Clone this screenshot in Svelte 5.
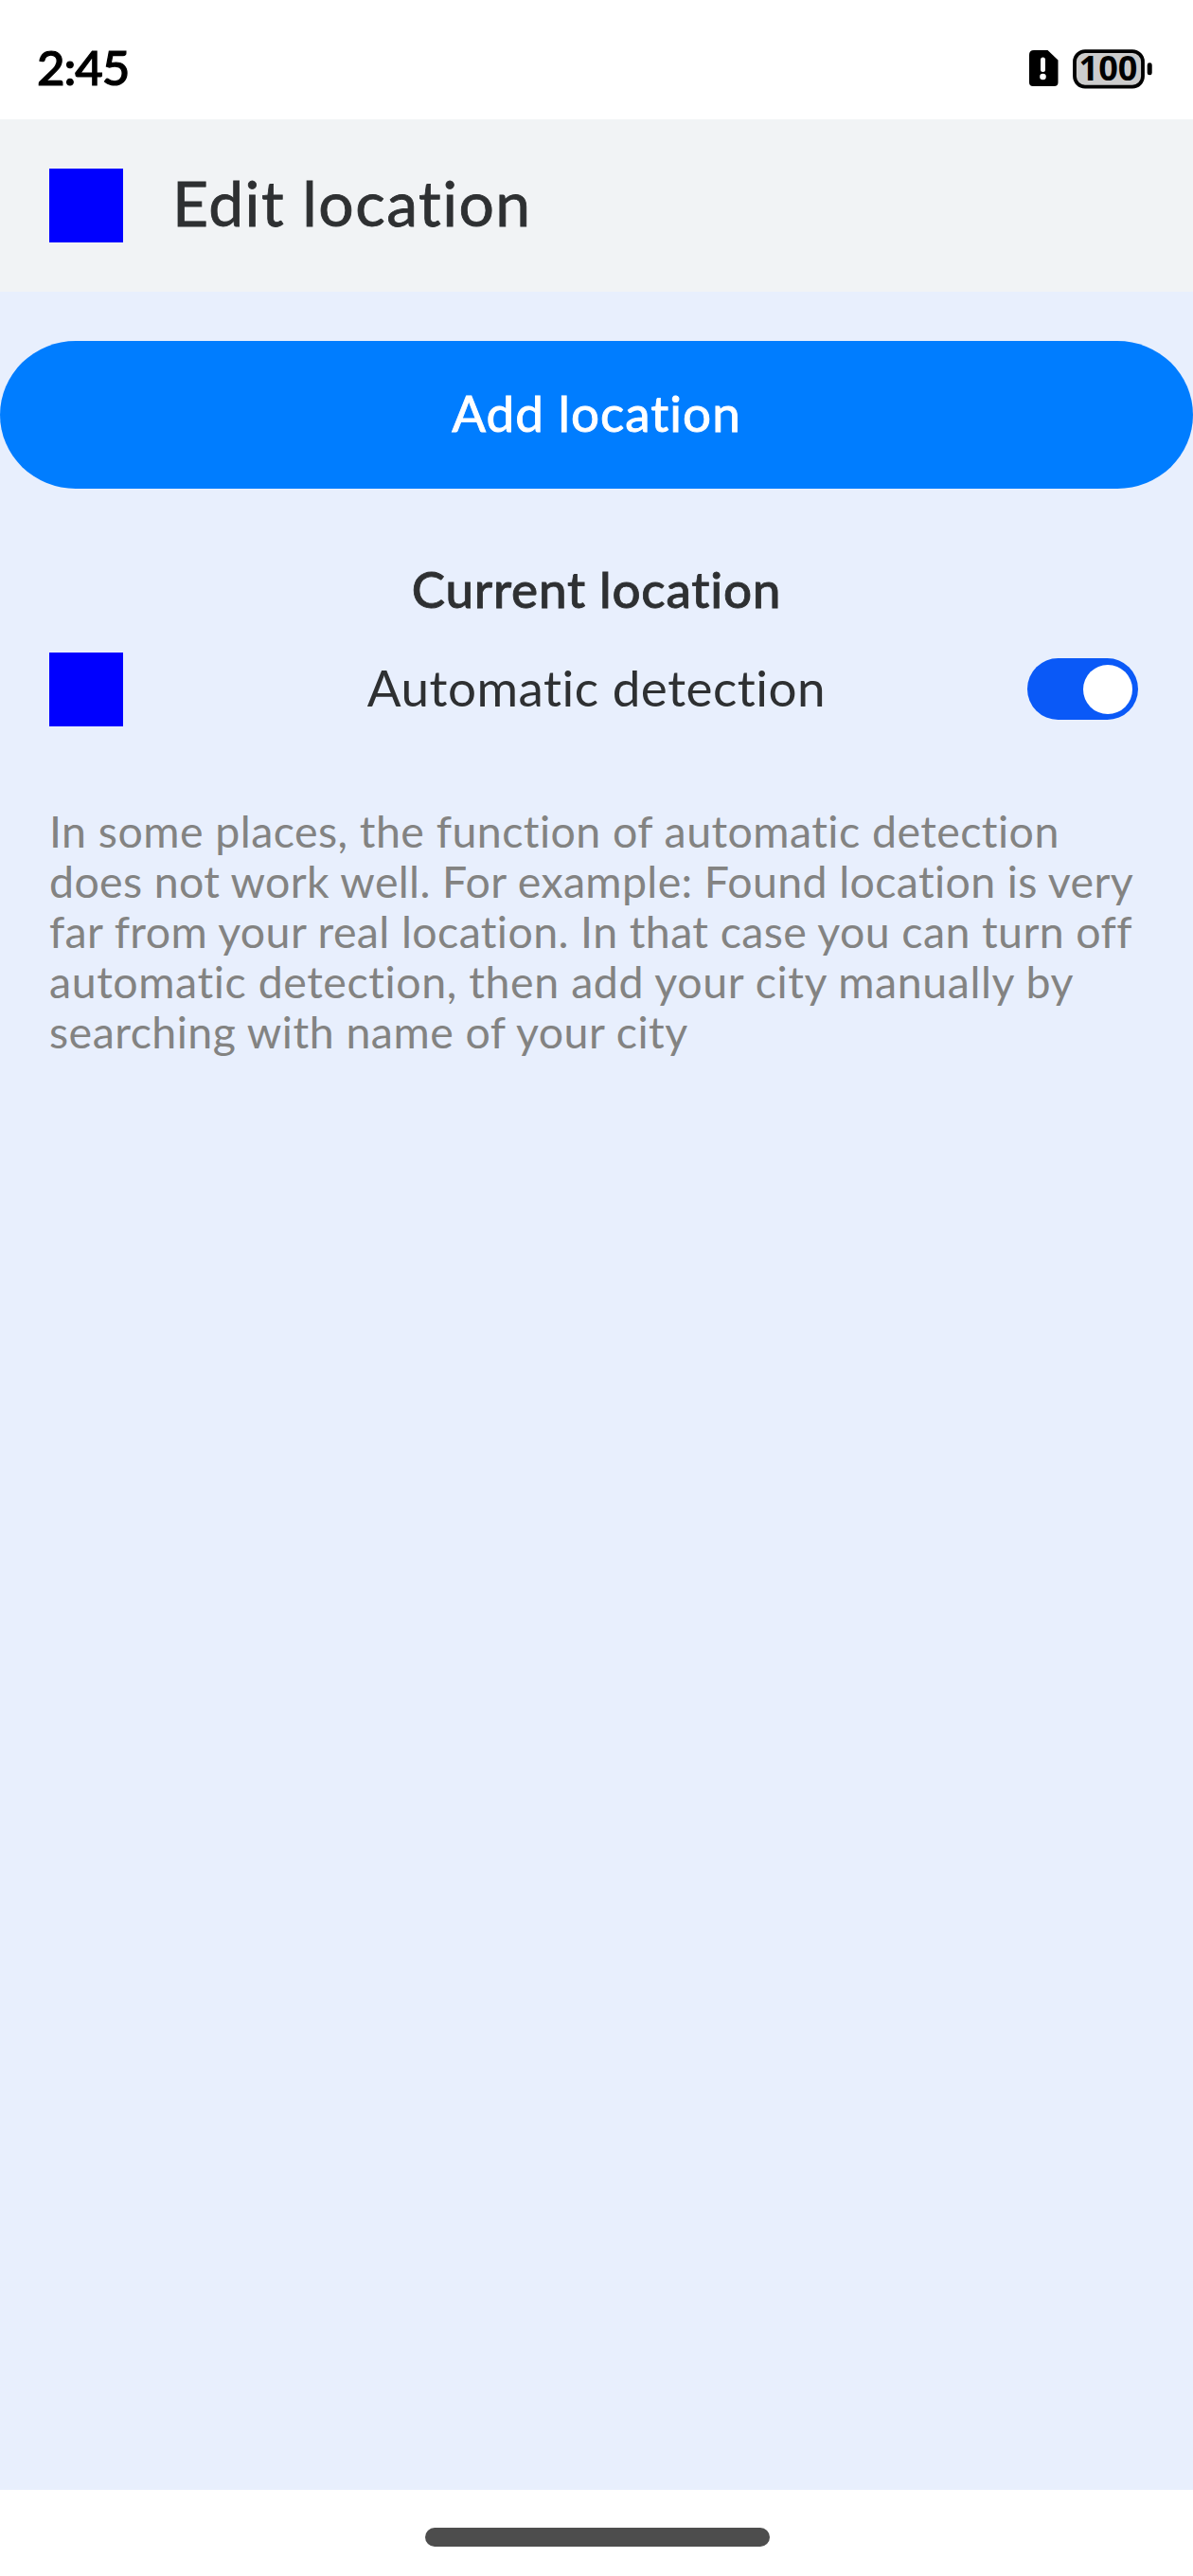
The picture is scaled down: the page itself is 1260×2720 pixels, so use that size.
<script>
  const note = [
    { text: 'In some places, the function of automatic detection', tracking: 0.44 },
    { text: 'does not work well. For example: Found location is very', tracking: 0.34 },
    { text: 'far from your real location. In that case you can turn off', tracking: 0.38 },
    { text: 'automatic detection, then add your city manually by', tracking: 0.57 },
    { text: 'searching with name of your city', tracking: 0.47 }
  ];
  let automatic = $state(true);
</script>

<div class="screen">
  <div class="status">
    <span class="time">2:45</span>
    <svg class="indicators" width="134" height="62" viewBox="0 -8 134 62">
      <path d="M8 3H22.5L33.5 13.5V37Q33.5 41 29.5 41H7Q3 41 3 37V8Q3 3 8 3Z" />
      <path d="M17.5 13V23.5" stroke="#fff" stroke-width="5" stroke-linecap="round" />
      <circle cx="17.5" cy="31" r="3.3" fill="#fff" />
      <rect x="51" y="4.2" width="72" height="37.4" rx="11" fill="#ccc" stroke="#000" stroke-width="3.8" />
      <text x="86.5" y="35.2" text-anchor="middle">100</text>
      <rect x="127.7" y="16.3" width="5" height="13" rx="2.4" />
    </svg>
  </div>

  <header>
    <div class="icon"></div>
    <h1>Edit location</h1>
  </header>

  <main>
    <button class="add">Add location</button>
    <h2>Current location</h2>
    <div class="row">
      <div class="icon"></div>
      <span class="label">Automatic detection</span>
      <button
        class="toggle"
        class:on={automatic}
        role="switch"
        aria-checked={automatic}
        aria-label="Automatic detection"
        onclick={() => (automatic = !automatic)}
      >
        <span class="thumb"></span>
      </button>
    </div>
    <p>
      {#each note as line}
        <span style:letter-spacing="{line.tracking}px">{line.text}</span>
      {/each}
    </p>
  </main>

  <footer><div class="handle"></div></footer>
</div>

<style>
  :global(body) {
    margin: 0;
    background: #fff;
  }
  .screen {
    width: 1260px;
    height: 2720px;
    display: flex;
    flex-direction: column;
    font-family: Lato, 'Open Sans', sans-serif;
    color: #2e3032;
    overflow: hidden;
    white-space: nowrap;
  }
  .status {
    height: 126px;
    box-sizing: border-box;
    padding: 17px 42px 0 39px;
    display: flex;
    align-items: center;
    justify-content: space-between;
    color: #000;
  }
  .time {
    padding-bottom: 2px;
    font-size: 51px;
    font-weight: 500;
    letter-spacing: -1.1px;
    -webkit-text-stroke: 1.2px #000;
  }
  .indicators {
    margin-top: 3px;
  }
  .indicators text {
    font: 700 36px 'Noto Sans', sans-serif;
  }
  header {
    height: 182px;
    background: #f1f3f5;
    display: flex;
    align-items: center;
    padding-left: 52px;
    gap: 52px;
  }
  .icon {
    width: 78px;
    height: 78px;
    background: #00f;
  }
  h1,
  h2,
  p {
    margin: 0;
  }
  h1 {
    padding-bottom: 6px;
    font-size: 66px;
    font-weight: 400;
    line-height: 80px;
    letter-spacing: 1.45px;
    -webkit-text-stroke: 0.8px;
  }
  main {
    flex: 1;
    background: #e8effd;
    padding-top: 52px;
  }
  button {
    border: 0;
    padding: 0;
    font: inherit;
  }
  .add {
    display: block;
    width: 100%;
    height: 156px;
    padding-bottom: 6px;
    border-radius: 80px / 78px;
    background: #007dff;
    color: #fff;
    font-size: 53px;
    letter-spacing: 1px;
    -webkit-text-stroke: 0.9px;
  }
  h2 {
    margin-top: 75px;
    line-height: 62px;
    text-align: center;
    font-size: 53px;
    font-weight: 500;
    letter-spacing: 0.75px;
    -webkit-text-stroke: 0.8px;
  }
  .row {
    margin-top: 36px;
    height: 78px;
    padding: 0 58px 0 52px;
    display: grid;
    grid-template-columns: 1fr auto 1fr;
    align-items: center;
  }
  .label {
    padding: 0 0 6px 6px;
    font-size: 53px;
    letter-spacing: 0.5px;
  }
  .toggle {
    justify-self: end;
    width: 117px;
    height: 65px;
    margin-bottom: 1px;
    border-radius: 33px;
    background: #c8ccd2;
    display: flex;
    align-items: center;
    padding: 0 6.5px;
  }
  .toggle.on {
    background: #0a59f7;
    justify-content: flex-end;
  }
  .thumb {
    width: 52px;
    height: 52px;
    border-radius: 50%;
    background: #fff;
  }
  p {
    margin-top: 84px;
    padding-left: 52px;
    display: flex;
    flex-direction: column;
    align-items: flex-start;
    color: #838382;
    font-size: 46.5px;
    line-height: 53px;
  }
  footer {
    height: 91px;
    background: #fff;
    display: flex;
    align-items: center;
    justify-content: center;
  }
  .handle {
    width: 364px;
    height: 20px;
    margin: 8px 0 0 2px;
    border-radius: 10px;
    background: #4d4d4d;
  }
</style>
